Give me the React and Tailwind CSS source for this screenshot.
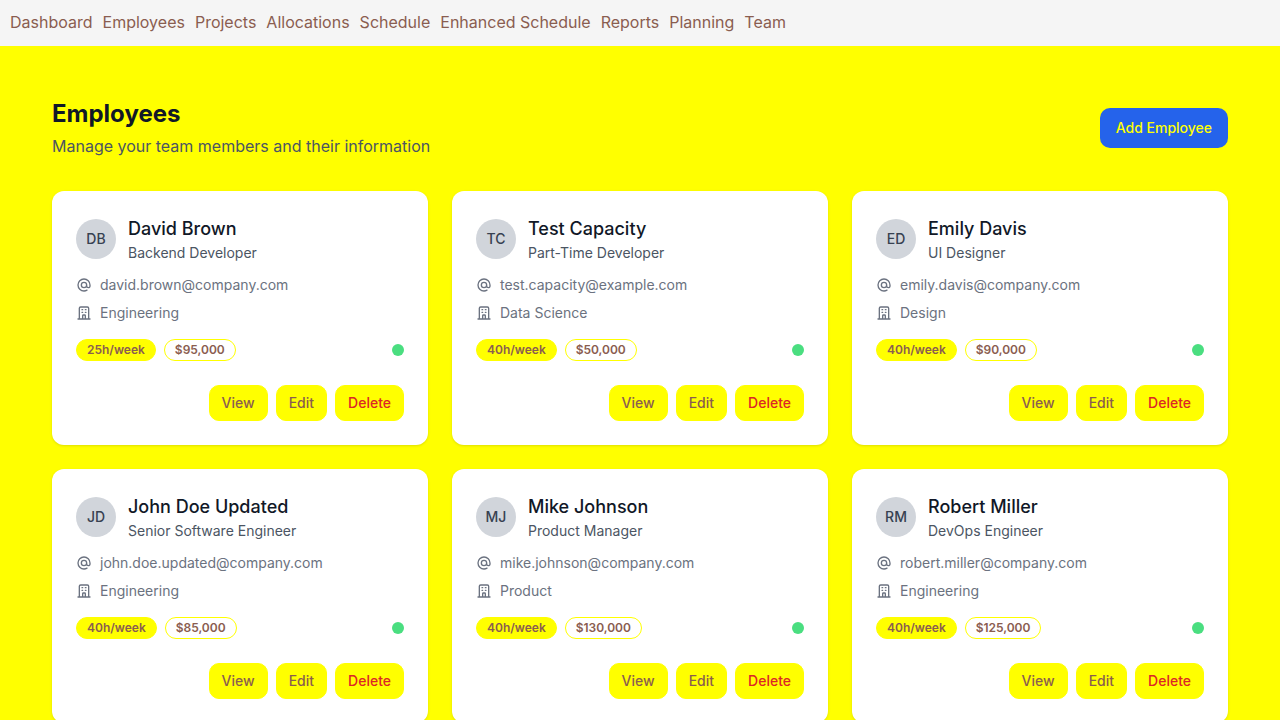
const links = ['Dashboard', 'Employees', 'Projects', 'Allocations', 'Schedule', 'Enhanced Schedule', 'Reports', 'Planning', 'Team'];

const employees = [
  { initials: 'DB', name: 'David Brown', role: 'Backend Developer', email: 'david.brown@company.com', dept: 'Engineering', hours: '25h/week', salary: '$95,000' },
  { initials: 'TC', name: 'Test Capacity', role: 'Part-Time Developer', email: 'test.capacity@example.com', dept: 'Data Science', hours: '40h/week', salary: '$50,000' },
  { initials: 'ED', name: 'Emily Davis', role: 'UI Designer', email: 'emily.davis@company.com', dept: 'Design', hours: '40h/week', salary: '$90,000' },
  { initials: 'JD', name: 'John Doe Updated', role: 'Senior Software Engineer', email: 'john.doe.updated@company.com', dept: 'Engineering', hours: '40h/week', salary: '$85,000' },
  { initials: 'MJ', name: 'Mike Johnson', role: 'Product Manager', email: 'mike.johnson@company.com', dept: 'Product', hours: '40h/week', salary: '$130,000' },
  { initials: 'RM', name: 'Robert Miller', role: 'DevOps Engineer', email: 'robert.miller@company.com', dept: 'Engineering', hours: '40h/week', salary: '$125,000' },
];

const AT = 'M16 12a4 4 0 10-8 0 4 4 0 008 0zm0 0v1.5a2.5 2.5 0 005 0V12a9 9 0 10-9 9m4.5-1.206a8.959 8.959 0 01-4.5 1.207';
const BUILDING = 'M19 21V5a2 2 0 00-2-2H7a2 2 0 00-2 2v16m14 0h2m-2 0h-5m-9 0H3m2 0h5M9 7h1m-1 4h1m4-4h1m-1 4h1m-5 10v-5a1 1 0 011-1h2a1 1 0 011 1v5m-4 0h4';

function InfoRow({ path, children }) {
  return (
    <div className="flex items-center text-sm text-[#6b7280]">
      <svg className="mr-2 size-4" fill="none" stroke="currentColor" viewBox="0 0 24 24">
        <path strokeLinecap="round" strokeLinejoin="round" strokeWidth={2} d={path} />
      </svg>
      <span>{children}</span>
    </div>
  );
}

function ActionButton({ danger, children }) {
  return (
    <button className={`h-9 rounded-[10px] border border-[#ffff00] bg-[#ffff00] px-3 text-sm font-medium ${danger ? 'text-[#dc2626]' : 'text-[#8a5d50]'}`}>
      {children}
    </button>
  );
}

function EmployeeCard({ person }) {
  return (
    <div className="rounded-xl bg-white p-6 shadow-sm">
      <div className="flex items-center gap-3">
        <div className="flex size-10 items-center justify-center rounded-full bg-[#d1d5db] text-sm font-medium text-[#374151]">
          {person.initials}
        </div>
        <div>
          <h3 className="text-lg font-medium leading-7 text-[#111827]">{person.name}</h3>
          <p className="text-sm text-[#4b5563]">{person.role}</p>
        </div>
      </div>
      <div className="mt-3 flex flex-col gap-2">
        <InfoRow path={AT}>{person.email}</InfoRow>
        <InfoRow path={BUILDING}>{person.dept}</InfoRow>
      </div>
      <div className="mt-4 flex items-center justify-between">
        <div className="flex gap-2">
          <span className="rounded-full border border-[#ffff00] bg-[#ffff00] px-2.5 py-0.5 text-xs font-semibold text-[#8a5d50]">{person.hours}</span>
          <span className="rounded-full border border-[#ffff00] px-2.5 py-0.5 text-xs font-semibold tracking-[-0.02px] text-[#8a5d50]">{person.salary}</span>
        </div>
        <div className="size-3 rounded-full bg-[#4ade80]" />
      </div>
      <div className="mt-6 flex justify-end gap-2">
        <ActionButton>View</ActionButton>
        <ActionButton>Edit</ActionButton>
        <ActionButton danger>Delete</ActionButton>
      </div>
    </div>
  );
}

export default function App() {
  return (
    <div className="h-screen overflow-hidden bg-[#ffff00] font-['Inter',sans-serif] antialiased">
      <nav className="flex h-[46px] gap-2.5 bg-[#f5f5f5] px-2.5 pt-2.5 text-base text-[#8a5d50]">
        {links.map((l) => <a key={l}>{l}</a>)}
      </nav>
      <main className="px-[52px] pt-[52px]">
        <div className="mb-[33px] flex items-center justify-between">
          <div>
            <h1 className="text-2xl font-bold text-[#111827]">Employees</h1>
            <p className="mt-1 text-[#4b5563]">Manage your team members and their information</p>
          </div>
          <button className="h-10 rounded-[10px] bg-[#2563eb] px-4 text-sm font-medium text-[#ffff00]">Add Employee</button>
        </div>
        <div className="grid grid-cols-3 gap-6">
          {employees.map((p) => <EmployeeCard key={p.name} person={p} />)}
        </div>
      </main>
    </div>
  );
}
